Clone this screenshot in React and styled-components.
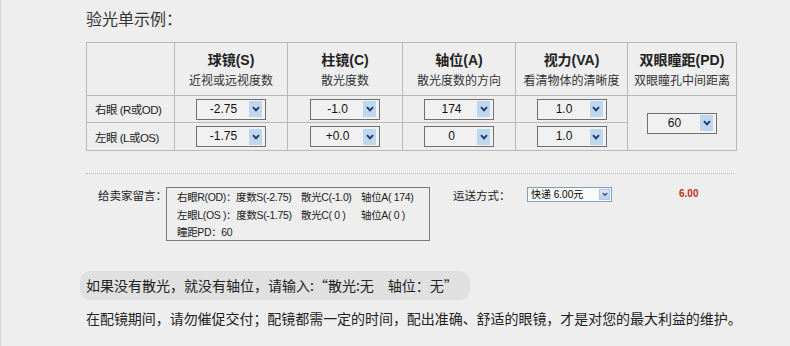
import React from "react";
import styled, { createGlobalStyle } from "styled-components";

const Global = createGlobalStyle`
  html, body { margin: 0; padding: 0; background: #eeeeee; }
  body { font-family: "Liberation Sans", "Noto Sans CJK SC", sans-serif; color: #222; }
`;

const Frame = styled.div`
  min-height: 346px;
  box-sizing: border-box;
  border-left: 1px solid #d6d6d6;
  padding: 8px 0 0 85px;
  background: #eeeeee;
`;

const Title = styled.div`
  font-size: 16px;
  line-height: 20px;
  color: #333;
  font-family: "Noto Sans CJK SC", sans-serif;
  margin-bottom: 14px;
`;

const Table = styled.table`
  border-collapse: collapse;
  table-layout: fixed;
  width: 651px;
  td, th { border: 1px solid #b9b9b9; padding: 0; box-sizing: border-box; }
`;

const HeadRow = styled.tr`
  height: 53px;
`;

const BodyRow = styled.tr`
  height: ${(p) => p.$h}px;
`;

const HeadCell = styled.th`
  vertical-align: top;
  padding-top: 8px !important;
  text-align: center;
  font-weight: normal;
`;

const HeadTitle = styled.div`
  font-size: 14px;
  font-weight: bold;
  line-height: 19px;
  color: #222;
`;

const HeadSub = styled.div`
  font-size: 12px;
  line-height: 19px;
  color: #333;
  font-family: "Noto Sans CJK SC", sans-serif;
`;

const RowLabel = styled.td`
  padding-left: 8px !important;
  font-size: 11.5px;
  color: #222;
  letter-spacing: -0.5px;
  white-space: nowrap;
`;

const Cell = styled.td`
  text-align: center;
  vertical-align: middle;
`;

const SelectBox = styled.div`
  display: inline-flex;
  align-items: center;
  width: 70px;
  height: 21px;
  box-sizing: border-box;
  border: 1px solid #6f6f6f;
  background: #f1f1f1;
  padding: 0 3px 0 1px;
  vertical-align: middle;
`;

const SelectValue = styled.span`
  flex: 1;
  text-align: center;
  font-size: 12px;
  color: #111;
  line-height: 19px;
`;

const ArrowBox = styled.span`
  width: 13px;
  height: 16px;
  background: #bed6ee;
  display: flex;
  align-items: center;
  justify-content: center;
`;

const Chevron = () => (
  <svg width="8" height="6" viewBox="0 0 8 6">
    <path d="M1 1.2 L4 4.3 L7 1.2" fill="none" stroke="#1c3866" strokeWidth="1.9" />
  </svg>
);

const Select = ({ value }) => (
  <SelectBox>
    <SelectValue>{value}</SelectValue>
    <ArrowBox>
      <Chevron />
    </ArrowBox>
  </SelectBox>
);

const Divider = styled.div`
  width: 648px;
  margin-top: 22px;
  border-top: 1px dotted #b8b8b8;
`;

const InfoRow = styled.div`
  display: flex;
  align-items: flex-start;
  margin-top: 13px;
`;

const FieldLabel = styled.div`
  margin-left: ${(p) => p.$ml}px;
  width: ${(p) => p.$w}px;
  flex-shrink: 0;
  font-size: 11.5px;
  line-height: 16px;
  color: #222;
  white-space: nowrap;
  font-family: "Noto Sans CJK SC", sans-serif;
`;

const MessageBox = styled.div`
  width: 264px;
  height: 54px;
  flex-shrink: 0;
  box-sizing: border-box;
  border: 1px solid #7a7a7a;
  padding: 1px 0 0 10px;
  font-size: 10.5px;
  letter-spacing: -0.35px;
  line-height: 17.5px;
  color: #222;
`;

const MsgLine = styled.div`
  display: grid;
  grid-template-columns: 124px 60px auto;
  white-space: pre;
`;

const ShipSelect = styled.div`
  display: flex;
  align-items: center;
  width: 85px;
  height: 15px;
  flex-shrink: 0;
  box-sizing: border-box;
  border: 1px solid #7f9db9;
  background: #fafafa;
  padding: 0 1px 0 3px;
`;

const ShipValue = styled.span`
  flex: 1;
  font-size: 10px;
  line-height: 13px;
  color: #000;
`;

const ShipArrow = styled.span`
  width: 11px;
  height: 11px;
  box-sizing: border-box;
  border: 1px solid #b3c6e6;
  background: linear-gradient(#dbe6f8, #b9cdef);
  display: flex;
  align-items: center;
  justify-content: center;
`;

const Price = styled.div`
  margin-left: 67px;
  font-size: 10px;
  line-height: 14px;
  font-weight: bold;
  color: #c0301a;
`;

const Notice = styled.div`
  display: inline-block;
  margin: 30px 0 0 -6px;
  padding: 0 12px 0 6px;
  height: 29px;
  line-height: 29px;
  border-radius: 10px;
  background: #e0e0e0;
  font-size: 14px;
  color: #222;
  font-family: "Noto Sans CJK SC", sans-serif;
`;

const Tip = styled.div`
  margin-top: 8px;
  font-size: 14px;
  line-height: 20px;
  color: #222;
  font-family: "Noto Sans CJK SC", sans-serif;
  white-space: nowrap;
  letter-spacing: -0.05px;
`;

const heads = [
  ["球镜(S)", "近视或远视度数"],
  ["柱镜(C)", "散光度数"],
  ["轴位(A)", "散光度数的方向"],
  ["视力(VA)", "看清物体的清晰度"],
  ["双眼瞳距(PD)", "双眼瞳孔中间距离"],
];

const widths = [88, 113, 115, 113, 112, 109];

export default function App() {
  return (
    <>
      <Global />
      <Frame>
        <Title>验光单示例：</Title>
        <Table>
          <colgroup>
            {widths.map((w, i) => (
              <col key={i} style={{ width: w }} />
            ))}
          </colgroup>
          <thead>
            <HeadRow>
              <HeadCell />
              {heads.map(([t, s]) => (
                <HeadCell key={t}>
                  <HeadTitle>{t}</HeadTitle>
                  <HeadSub>{s}</HeadSub>
                </HeadCell>
              ))}
            </HeadRow>
          </thead>
          <tbody>
            <BodyRow $h={27}>
              <RowLabel>右眼 (R或OD)</RowLabel>
              <Cell><Select value="-2.75" /></Cell>
              <Cell><Select value="-1.0" /></Cell>
              <Cell><Select value="174" /></Cell>
              <Cell><Select value="1.0" /></Cell>
              <Cell rowSpan={2}><Select value="60" /></Cell>
            </BodyRow>
            <BodyRow $h={28}>
              <RowLabel>左眼 (L或OS)</RowLabel>
              <Cell><Select value="-1.75" /></Cell>
              <Cell><Select value="+0.0" /></Cell>
              <Cell><Select value="0" /></Cell>
              <Cell><Select value="1.0" /></Cell>
            </BodyRow>
          </tbody>
        </Table>
        <Divider />
        <InfoRow>
          <FieldLabel $ml={12} $w={68}>给卖家留言：</FieldLabel>
          <MessageBox>
            <MsgLine>
              <span>右眼R(OD)：度数S(-2.75)</span>
              <span>散光C(-1.0)</span>
              <span>轴位A( 174)</span>
            </MsgLine>
            <MsgLine>
              <span>左眼L(OS )：度数S(-1.75)</span>
              <span>散光C( 0 )</span>
              <span>轴位A( 0 )</span>
            </MsgLine>
            <div>瞳距PD：60</div>
          </MessageBox>
          <FieldLabel $ml={23} $w={74}>运送方式：</FieldLabel>
          <ShipSelect>
            <ShipValue>快递 6.00元</ShipValue>
            <ShipArrow>
              <svg width="6" height="5" viewBox="0 0 6 5">
                <path d="M0.8 1 L3 3.4 L5.2 1" fill="none" stroke="#2a4a80" strokeWidth="1.3" />
              </svg>
            </ShipArrow>
          </ShipSelect>
          <Price>6.00</Price>
        </InfoRow>
        <Notice>如果没有散光，就没有轴位，请输入:“散光:无　轴位：无”</Notice>
        <Tip>在配镜期间，请勿催促交付；配镜都需一定的时间，配出准确、舒适的眼镜，才是对您的最大利益的维护。</Tip>
      </Frame>
    </>
  );
}
